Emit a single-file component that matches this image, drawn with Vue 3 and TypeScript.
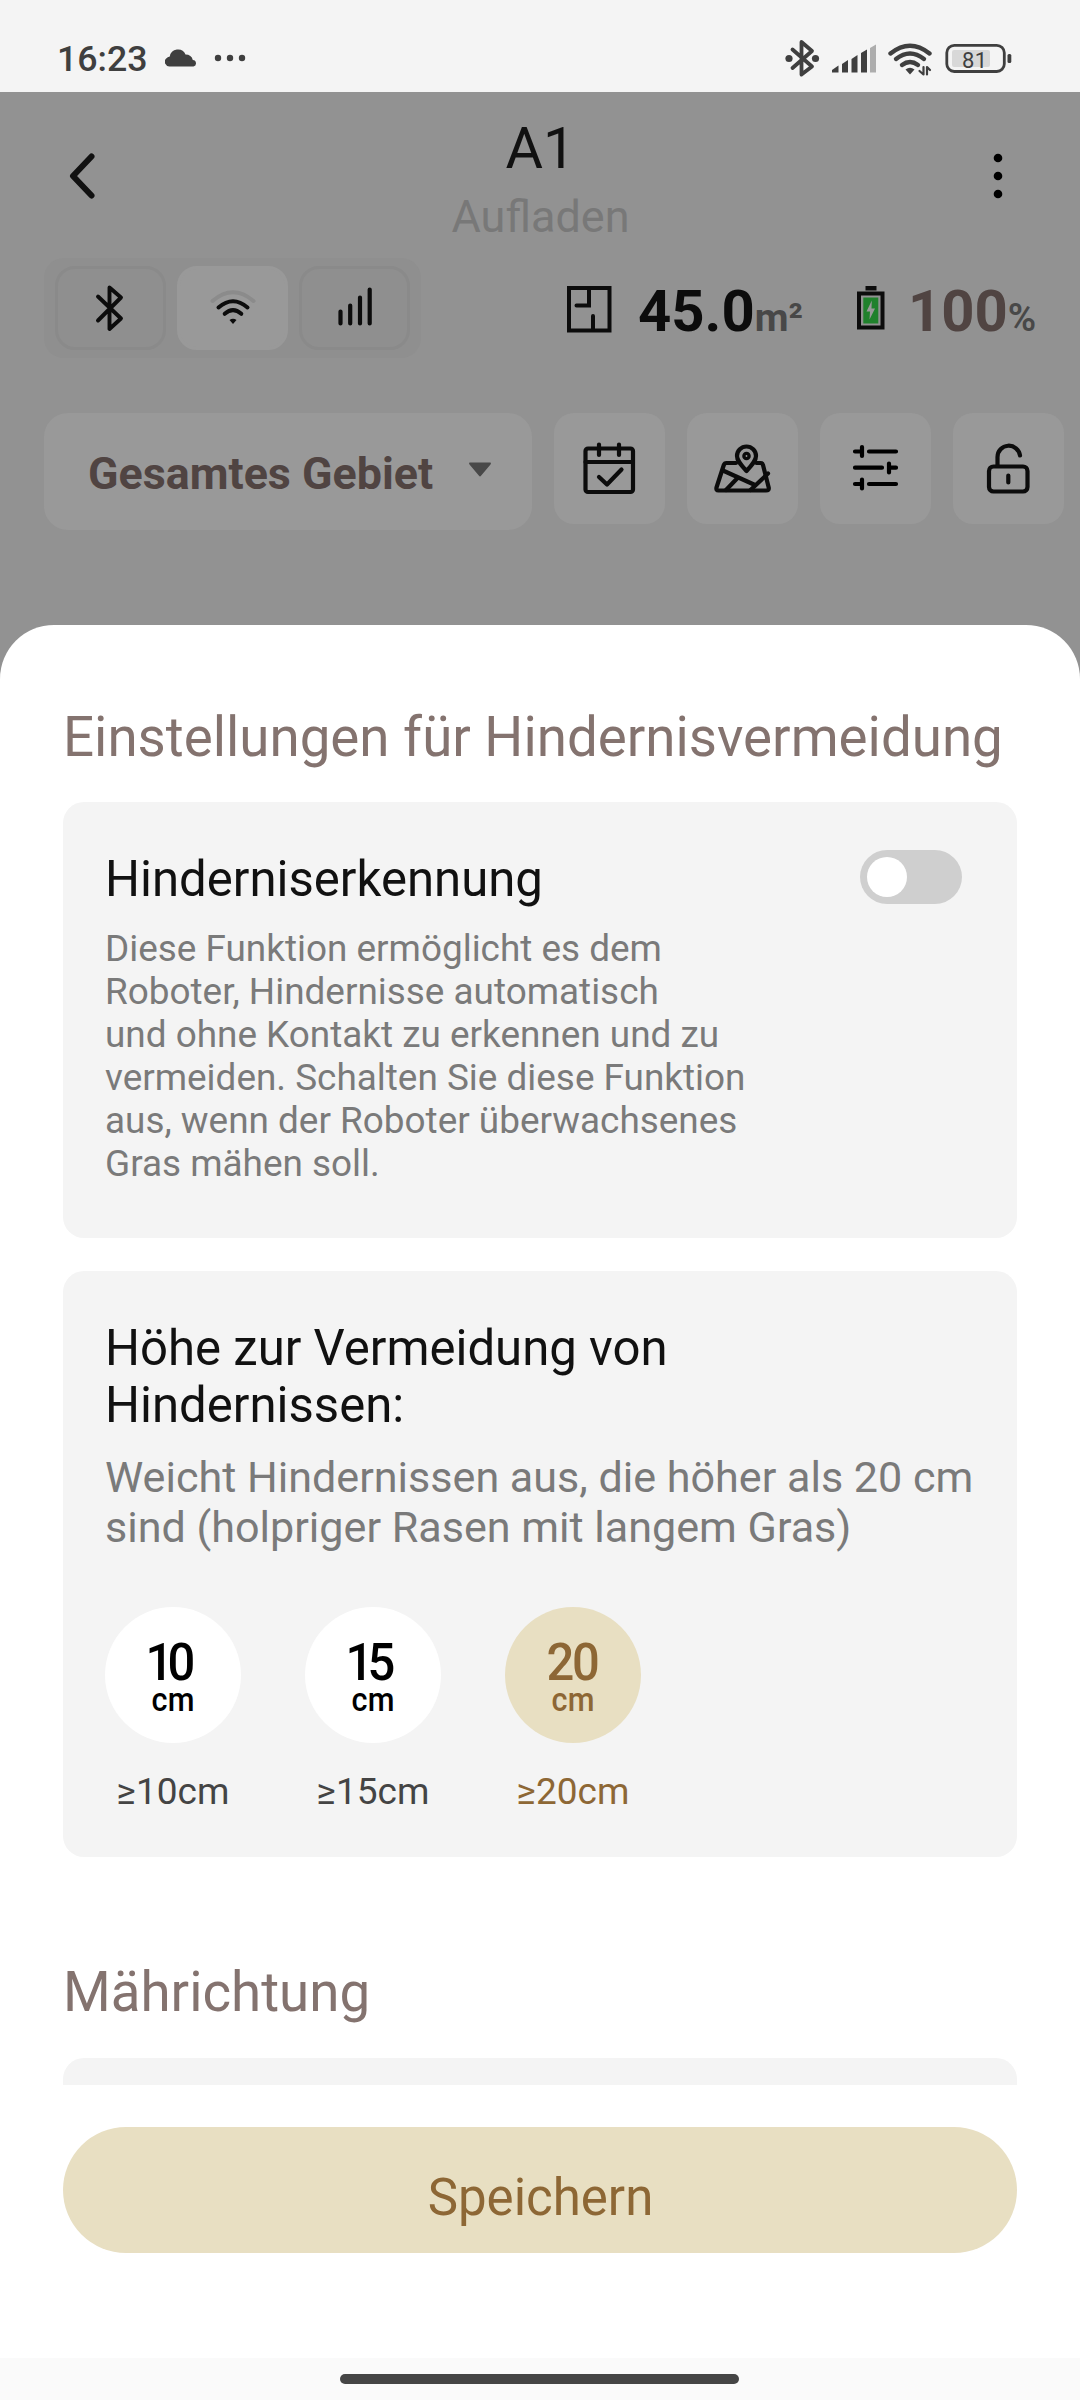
<script setup lang="ts">
interface Level { value: number; active: boolean }

const levels: Level[] = [
  { value: 10, active: false },
  { value: 15, active: false },
  { value: 20, active: true },
]
</script>

<template>
  <div class="phone">
    <header class="status">
      <span class="clock">16:23</span>
      <svg class="cloud" width="32" height="19" viewBox="0 0 32 19">
        <path d="M5 18.500A4.700 4.700 0 0 1 1.200 10.500Q2.500 8.800 4.800 8.500A8.200 8.200 0 0 1 20.500 6.500Q26.500 6.500 27.800 12A3.300 3.300 0 0 1 28.500 18.500Z" fill="#3f3f3f" />
      </svg>
      <svg class="more" width="32" height="8" viewBox="0 0 32 8" fill="#3f3f3f">
        <circle cx="4" cy="4" r="3.200" /><circle cx="16" cy="4" r="3.200" /><circle cx="28" cy="4" r="3.200" />
      </svg>
      <svg class="indicators" width="236" height="42" viewBox="780 36 236 42" fill="none" stroke="#3f3f3f" stroke-linecap="round" stroke-linejoin="round">
        <path d="M792.500 48.500L812 65.500L801.500 73.500V41L812 50L792.500 67" stroke-width="3.800" />
        <circle cx="789" cy="57.500" r="3.600" fill="#3f3f3f" stroke="none" />
        <circle cx="815.500" cy="57.500" r="3.600" fill="#3f3f3f" stroke="none" />
        <g fill="#3f3f3f" stroke="none">
          <path d="M832 69L838.500 64.500V71.500H832Z" />
          <path d="M842 63L848 59V71.500H842Z" />
          <path d="M851.500 58L857.500 54V71.500H851.500Z" />
          <path d="M861 52L867 48.500V71.500H861Z" />
          <path d="M870 47L876 43.500V71.500H870Z" fill="#adadad" />
        </g>
        <path d="M890.500 52.500Q910 37 929.500 52.500" stroke-width="4.400" />
        <path d="M896 58Q910 47 924 58" stroke-width="4.400" />
        <path d="M902 64Q910 58 918 64" stroke-width="4.400" />
        <path d="M905.500 68.500Q910 65 914.500 68.500L910 73.500Z" fill="#3f3f3f" stroke="none" />
        <path d="M923.500 66V73.500L919.500 70M927 73.500V66L930 69" stroke-width="2.200" />
        <rect x="946.800" y="44.300" width="57.500" height="26.200" rx="7.500" stroke-width="2.800" />
        <rect x="952" y="49" width="38" height="17" rx="2" fill="#d8d8d8" stroke="none" />
        <rect x="1007.500" y="53" width="3.800" height="9" rx="1.500" fill="#3f3f3f" stroke="none" />
        <text x="962" y="66.700" class="level">81</text>
      </svg>
    </header>

    <section class="dimmed">
      <div class="appbar">
        <svg class="back" width="32" height="48" viewBox="0 0 32 48" fill="none" stroke="#111" stroke-width="6" stroke-linecap="round" stroke-linejoin="round">
          <path d="M25.500 4.500L7 24L25.500 43.500" />
        </svg>
        <div class="heading">
          <h1>A1</h1>
          <p>Aufladen</p>
        </div>
        <svg class="menu" width="12" height="48" viewBox="0 0 12 48">
          <circle cx="6" cy="6" r="4.300" /><circle cx="6" cy="24" r="4.300" /><circle cx="6" cy="42" r="4.300" />
        </svg>
      </div>

      <div class="info">
        <div class="segments">
          <div class="segment">
            <svg width="44" height="50" viewBox="0 0 44 50" fill="none" stroke="#0c0c0c" stroke-width="3.900" stroke-linecap="round" stroke-linejoin="round">
              <path d="M9 13.500L32 35.500L20.500 46V4.500L32 14.500L9 37.500" />
            </svg>
          </div>
          <div class="segment on">
            <svg width="48" height="40" viewBox="0 0 48 40" fill="none" stroke="#0c0c0c" stroke-width="4" stroke-linecap="round">
              <path d="M3.500 13Q24 -4.500 44.500 13" stroke="#8b8b8b" />
              <path d="M9.500 19.500Q24 7 38.500 19.500" />
              <path d="M15.700 25.800Q24 18.300 32.300 25.800" />
              <path d="M20.500 32Q24 29.300 27.500 32L24 36Z" fill="#0c0c0c" stroke="none" />
            </svg>
          </div>
          <div class="segment">
            <svg class="bars" width="40" height="42" viewBox="0 0 40 42" stroke="#0c0c0c" stroke-width="4.200" stroke-linecap="round">
              <path d="M5.500 25.500V37.500M15.200 19.500V37.500M25 11.500V37.500M34.700 3.500V37.500" />
            </svg>
          </div>
        </div>
        <div class="metric area">
          <svg width="46" height="48" viewBox="0 0 46 48" fill="none" stroke="#0c0c0c" stroke-width="4" stroke-linecap="round">
            <rect x="3" y="3" width="40.500" height="42.500" />
            <path d="M23 4V20.500H10.500M27 44V31" />
          </svg>
          <strong>45.0</strong><em>m²</em>
        </div>
        <div class="metric battery">
          <svg width="28" height="46" viewBox="0 0 28 46">
            <rect x="8.500" y="1" width="11" height="4.500" fill="#0c0c0c" />
            <rect x="2" y="8.500" width="23.500" height="34" fill="none" stroke="#0c0c0c" stroke-width="4" />
            <rect x="6.300" y="12.500" width="15" height="26" fill="#20812c" />
            <path d="M14.800 15.500L9.500 26.500H13L12.500 34.500L18 23.500H14.500Z" fill="#999" />
          </svg>
          <strong>100</strong><em>%</em>
        </div>
      </div>

      <div class="tools">
        <div class="zone">
          <span>Gesamtes Gebiet</span>
          <svg width="24" height="16" viewBox="0 0 24 16"><path d="M1.500 0.500H22.500Q23.500 1 22.500 2.500L13 13.800Q12 15 11 13.800L1.500 2.500Q0.500 1 1.500 0.500Z" fill="#484848" /></svg>
        </div>
        <div class="tool">
          <svg width="111" height="111" viewBox="0 0 111 111" fill="none" stroke="#0c0c0c" stroke-width="4.200" stroke-linecap="round" stroke-linejoin="round">
            <rect x="31.500" y="35.500" width="47.500" height="43.500" rx="2.500" />
            <path d="M31.500 49H79M45 31.500V42M65 31.500V42M45 64L53 71.500L67.500 56.500" />
          </svg>
        </div>
        <div class="tool">
          <svg width="111" height="111" viewBox="0 0 111 111" fill="none" stroke="#0c0c0c" stroke-width="4.200" stroke-linecap="round" stroke-linejoin="round">
            <path d="M49 50H39.500Q37.500 50 36.800 52L29.500 74.500Q28.800 77.500 31.500 77.500H79Q82.300 77.500 81.700 74.500L76 52Q75.500 50 73.500 50H69.500" />
            <path d="M37 58L68 72M51 64.500L39 77M81 60.500L63.500 77" />
            <path d="M59.500 58C52.500 50.500 50 47 50 43A9.500 9.500 0 0 1 69 43C69 47 66.500 50.500 59.500 58Z" />
            <circle cx="59.500" cy="43" r="2.600" stroke-width="3.400" />
          </svg>
        </div>
        <div class="tool">
          <svg width="111" height="111" viewBox="0 0 111 111" fill="none" stroke="#000" stroke-width="4.200" stroke-linecap="round">
            <path d="M35 38.500H42M49 38.500H76M42 34V43M35 54.700H62M69 50.500V59.500M69 54.700H76M35 71H42M49 71H76M42 66.500V75.500" />
          </svg>
        </div>
        <div class="tool">
          <svg width="111" height="111" viewBox="0 0 111 111" fill="none" stroke="#0c0c0c" stroke-width="4.200" stroke-linecap="round" stroke-linejoin="round">
            <rect x="36" y="53.500" width="38.500" height="25" rx="4.500" />
            <path d="M44.500 53V44A11.300 11.300 0 0 1 67 42.500M55.300 62.500V69.500" />
          </svg>
        </div>
      </div>
    </section>

    <main class="sheet">
      <div class="scroll">
        <h2>Einstellungen für Hindernisvermeidung</h2>
        <section class="card detection">
          <div class="copy">
            <h3>Hinderniserkennung</h3>
            <p>Diese Funktion ermöglicht es dem<br>Roboter, Hindernisse automatisch<br>und ohne Kontakt zu erkennen und zu<br>vermeiden. Schalten Sie diese Funktion<br>aus, wenn der Roboter überwachsenes<br>Gras mähen soll.</p>
          </div>
          <div class="toggle"><i></i></div>
        </section>
        <section class="card height">
          <h3>Höhe zur Vermeidung von<br>Hindernissen:</h3>
          <p>Weicht Hindernissen aus, die höher als 20 cm<br>sind (holpriger Rasen mit langem Gras)</p>
          <div class="levels">
            <div v-for="l in levels" :key="l.value" class="option" :class="{ active: l.active }">
              <div class="circle"><b :class="{ tight: l.value < 20 }">{{ l.value }}</b><small>cm</small></div>
              <span>≥{{ l.value }}cm</span>
            </div>
          </div>
        </section>
        <h2 class="second">Mährichtung</h2>
        <section class="card direction"></section>
      </div>
      <button class="save">Speichern</button>
    </main>
    <footer class="gesture"><i></i></footer>
  </div>
</template>

<style>
body { margin: 0; }
</style>

<style scoped>
* { box-sizing: border-box; margin: 0; padding: 0; }
.phone { width: 1080px; height: 2400px; overflow: hidden; display: flex; flex-direction: column; background: #929292; font-family: Roboto, "Liberation Sans", sans-serif; }
svg { display: block; flex: none; }
.status { height: 92px; flex: none; background: #f4f4f4; display: flex; align-items: center; padding: 24px 64px 0 57px; color: #3f3f3f; }
.clock { font-size: 35.700px; font-weight: 460; line-height: 42px; width: 108px; padding-top: 1px; }
.cloud { margin-top: -2px; margin-right: 17px; }
.indicators { margin-left: auto; }
.level { font-size: 22px; font-weight: 400; letter-spacing: 0.5px; fill: #3f3f3f; stroke: none; }
.dimmed { height: 533px; flex: none; background: #929292; }
.appbar { height: 166px; display: flex; padding: 0 76px 0 66px; }
.back { margin-top: 60px; }
.heading { flex: 1; text-align: center; padding-right: 27px; padding-left: 18px; }
.heading h1 { font-size: 57.500px; font-weight: 400; line-height: 68px; margin-top: 23px; color: #111; }
.heading p { font-size: 45px; line-height: 52px; margin-top: 8px; color: #787878; }
.menu { margin-top: 60px; }
.info { height: 100px; display: flex; padding-left: 44px; }
.segments { width: 377px; height: 100px; padding: 8px 11px; display: flex; gap: 11px; background: #8f8f8f; border-radius: 20px; }
.segment { width: 111px; height: 84px; border: 3px solid #8a8a8a; border-radius: 20px; display: flex; align-items: center; justify-content: center; }
.segment.on { background: #999; border-color: #999; }
.bars { margin-top: -3px; }
.metric { display: flex; align-items: baseline; white-space: nowrap; color: #0c0c0c; }
.metric svg { align-self: flex-start; }
.metric strong { font-size: 58px; line-height: 68px; font-weight: 700; margin-top: 19px; }
.metric em { font-style: normal; font-size: 39px; font-weight: 700; color: #484848; }
.area { margin-left: 145px; width: 291px; }
.area svg { margin: 27px 26px 0 0; }
.battery strong { color: #504442; margin-left: 23px; }
.battery svg { margin-top: 27px; }
.battery em { font-size: 38.500px; font-weight: 600; }
.tools { display: flex; gap: 22px; padding: 55px 0 0 44px; }
.zone { width: 488px; height: 117px; flex: none; background: #999; border-radius: 24px; display: flex; align-items: center; padding-left: 44px; }
.zone span { font-size: 44.800px; font-weight: 700; color: #504442; line-height: 54px; width: 380px; padding-top: 4px; white-space: nowrap; }
.zone svg { margin-top: -3px; }
.tool { width: 111px; height: 111px; flex: none; background: #999; border-radius: 20px; }
.sheet { height: 1733px; flex: none; background: #fff; border-radius: 54px 54px 0 0; padding: 0 63px; }
.scroll { height: 1460px; overflow: hidden; padding-top: 80px; }
h2 { font-size: 54.700px; font-weight: 400; color: #84736f; line-height: 64px; white-space: nowrap; }
.card { background: #f4f4f4; border-radius: 21px; padding-left: 42px; }
.detection { height: 436px; margin-top: 33px; display: flex; justify-content: space-between; padding-right: 55px; }
h3 { font-size: 49.100px; font-weight: 400; color: #111; line-height: 57px; }
.detection h3 { margin-top: 49px; }
.detection p { font-size: 36.900px; line-height: 43px; color: #7a7a7a; margin-top: 19px; white-space: nowrap; }
.toggle { width: 102px; height: 54px; margin-top: 48px; border-radius: 27px; background: #cfcfcf; padding: 7px; }
.toggle i { display: block; width: 40px; height: 40px; border-radius: 50%; background: #fff; }
.height { height: 586px; margin-top: 33px; padding-top: 49px; }
.height p { font-size: 43.100px; line-height: 50px; color: #7a7a7a; margin-top: 19px; white-space: nowrap; }
.levels { display: flex; gap: 64px; margin-top: 54px; }
.option { width: 136px; display: flex; flex-direction: column; align-items: center; color: #444; }
.circle { width: 136px; height: 136px; border-radius: 50%; background: #fff; color: #000; display: flex; flex-direction: column; align-items: center; }
.circle b { font-size: 52px; line-height: 60px; font-weight: 500; letter-spacing: -2.500px; margin-top: 26px; margin-right: 1px; transform: scaleX(0.94); }
.circle b.tight { letter-spacing: -6px; margin-right: 11px; }
.circle small { font-size: 33px; line-height: 36px; font-weight: 500; margin-top: -11px; margin-right: 1px; transform: scaleX(0.93); }
.option > span { font-size: 37px; line-height: 44px; margin-top: 27px; }
.active, .active .circle { color: #8d6735; }
.active .circle { background: #e8dfc2; }
.second { margin-top: 103px; }
.direction { height: 60px; margin-top: 34px; }
.save { display: block; width: 954px; height: 126px; margin-top: 42px; border: 0; border-radius: 63px; background: #e8dfc2; color: #8d6735; font: 400 51px/60px Roboto, sans-serif; padding: 16px 0 0 1px; }
.gesture { height: 42px; background: #fafafa; padding-top: 16px; }
.gesture i { display: block; width: 399px; height: 10px; margin-left: 340px; border-radius: 5px; background: #454545; }
</style>
